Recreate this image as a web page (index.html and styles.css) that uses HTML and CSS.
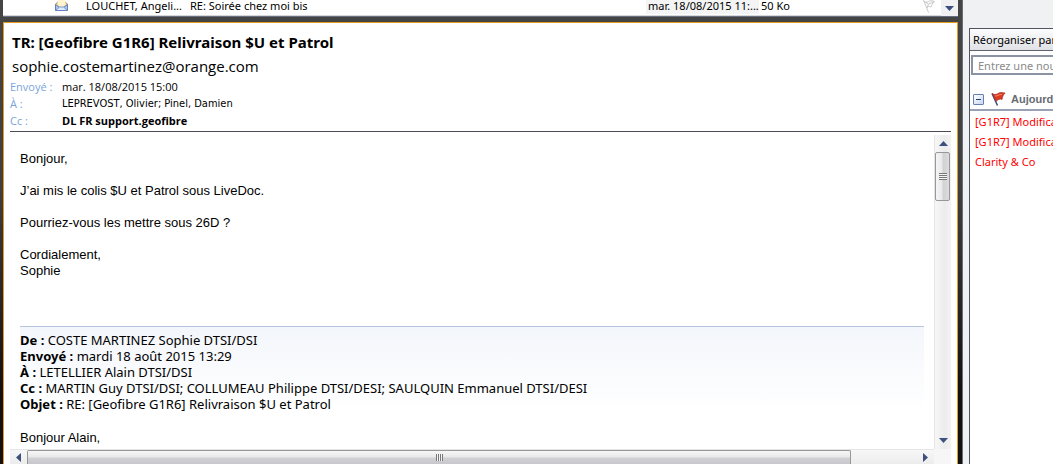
FILE: index.html
```html
<!DOCTYPE html>
<html lang="fr">
<head>
<meta charset="utf-8">
<title>TR: [Geofibre G1R6] Relivraison $U et Patrol</title>
<link rel="stylesheet" href="styles.css">
</head>
<body>
<div class="app">
  <main class="mail">
    <section class="list">
      <div class="list-row">
        <svg class="envelope" viewBox="0 0 13 11" aria-hidden="true">
          <path d="M.5 4 6.5 -1 12.5 4V10.500H.5Z" fill="#f3c95c" stroke="#8c8c9c"/>
          <path d="M2.500 0H10.500V5L6.500 8 2.500 5Z" fill="#fff4cf"/>
          <path d="M.5 4.500 4.500 7.500H8.500L12.500 4.500V10.500H.5Z" fill="#a9c8f2" stroke="#6582c0"/>
          <path d="M1 10 4.500 7H8.500L12 10" fill="#dceaff" stroke="#7795d0"/>
        </svg>
        <span class="list-from">LOUCHET, Angeli...</span>
        <span class="list-subject">RE: Soirée chez moi bis</span>
        <span class="list-date">mar. 18/08/2015 11:...</span>
        <span class="list-size">50 Ko</span>
        <svg class="flag-off" viewBox="0 0 14 13" aria-hidden="true">
          <path d="M1.500 0 6.500 12.500M2 1.500C5 4 7 -1 12.500 1.500C10 3 10 5 9 7C7 6 5.500 6.500 4.500 8M2 1.500 6.500 4 12 1.500M6.500 4 5 8" fill="none" stroke="#c9c9c9"/>
        </svg>
      </div>
      <button class="list-down" aria-label="Défiler vers le bas"><svg class="arrow-v" viewBox="0 0 9 5" aria-hidden="true"><path d="M0 0H9L4.500 5Z"/></svg></button>
    </section>

    <article class="reader">
      <header class="head">
        <h1 class="subject">TR: [Geofibre G1R6] Relivraison $U et Patrol</h1>
        <p class="sender">sophie.costemartinez@orange.com</p>
        <dl class="meta">
          <dt>Envoyé :</dt><dd>mar. 18/08/2015 15:00</dd>
          <dt>À :</dt><dd class="recipients">LEPREVOST, Olivier; Pinel, Damien</dd>
          <dt>Cc :</dt><dd class="strong">DL FR support.geofibre</dd>
        </dl>
      </header>
      <div class="view">
        <div class="message">
          <p>Bonjour,</p>
          <p>J’ai mis le colis $U et Patrol sous LiveDoc.</p>
          <p>Pourriez-vous les mettre sous 26D ?</p>
          <p>Cordialement,<br>Sophie</p>
          <div class="quoted">
            <b>De :</b> COSTE MARTINEZ Sophie DTSI/DSI<br>
            <b>Envoyé :</b> mardi 18 août 2015 13:29<br>
            <b>À :</b> LETELLIER Alain DTSI/DSI<br>
            <b>Cc :</b> MARTIN Guy DTSI/DSI; COLLUMEAU Philippe DTSI/DESI; SAULQUIN Emmanuel DTSI/DESI<br>
            <b>Objet :</b> RE: [Geofibre G1R6] Relivraison $U et Patrol
          </div>
          <p>Bonjour Alain,</p>
        </div>
        <div class="vbar">
          <button class="bar-btn" aria-label="Haut"><svg class="arrow-v" viewBox="0 0 9 5" aria-hidden="true"><path d="M0 5H9L4.500 0Z"/></svg></button>
          <div class="vthumb"><span class="vgrip"></span></div>
          <button class="bar-btn bar-end" aria-label="Bas"><svg class="arrow-v" viewBox="0 0 9 5" aria-hidden="true"><path d="M0 0H9L4.500 5Z"/></svg></button>
        </div>
        <div class="hbar">
          <button class="bar-btn" aria-label="Gauche"><svg class="arrow-h" viewBox="0 0 5 9" aria-hidden="true"><path d="M5 0V9L0 4.500Z"/></svg></button>
          <div class="htrack"><div class="hthumb"><span class="hgrip"></span></div></div>
          <button class="bar-btn" aria-label="Droite"><svg class="arrow-h" viewBox="0 0 5 9" aria-hidden="true"><path d="M0 0V9L5 4.500Z"/></svg></button>
        </div>
        <div class="corner"></div>
      </div>
    </article>
  </main>

  <aside class="side">
    <div class="tasks">
      <button class="sort">Réorganiser par</button>
      <input class="new-task" type="text" placeholder="Entrez une nouvelle tâche" aria-label="Nouvelle tâche">
      <h2 class="group">
        <button class="toggle" aria-label="Réduire"></button>
        <svg class="flag" viewBox="0 0 15 14" aria-hidden="true">
          <path d="M1 1.500 6.500 13.500" stroke="#34507e" stroke-width="1.500" fill="none"/>
          <path d="M1.500 1.500C4 3.500 6 2 8 1C10 0 12 1 14 1C12 3 11.500 5 11 7.500C9 6.500 6.500 7.500 5 9.500Z" fill="#dc3b22" stroke="#a32a1c" stroke-width=".7"/>
          <path d="M4 4C6.500 4.500 8 2 11 2.500" stroke="#ff8a6a" stroke-width="1" fill="none"/>
        </svg>
        <span>Aujourd'hui</span>
      </h2>
      <ul class="items">
        <li>[G1R7] Modification</li>
        <li>[G1R7] Modification</li>
        <li>Clarity &amp; Co</li>
      </ul>
    </div>
  </aside>
</div>
</body>
</html>
```
FILE: styles.css
```css
* { box-sizing: border-box; }
body { margin: 0; font: 11px/16px "Noto Sans", sans-serif; color: #000; background: #eff1f3; }
button { margin: 0; padding: 0; border: 0; background: none; font: inherit; color: inherit; }
h1, h2, p, dl, dd, ul { margin: 0; padding: 0; }

.app { display: grid; grid-template-columns: minmax(0, 1fr) 90px; grid-template-rows: minmax(0, 1fr); height: 100vh; overflow: hidden; }
.mail { display: flex; flex-direction: column; gap: 5px; padding: 0 4px 0 3px; border-right: 1px solid #686d7a; background: linear-gradient(#454545, #404040 40%, #111 85%); }

.list { display: flex; flex: none; height: 17px; background: #fff; border-bottom: 1px solid #687080; }
.list-row { flex: 1; min-width: 0; display: flex; align-items: flex-start; line-height: 12px; white-space: nowrap; border-bottom: 1px solid #d5d7da; padding-left: 52px; }
.envelope { width: 13px; height: 11px; margin-right: 18px; flex: none; }
.list-from { width: 104px; flex: none; }
.list-subject { flex: 1; }
.list-date { width: 113px; height: 14px; padding-left: 2px; background: #f4f4f5; }
.list-size { width: 163px; padding-left: 2px; }
.flag-off { width: 14px; height: 13px; flex: none; margin-right: 5px; }
.list-down { width: 17px; background: #f1f1f3; display: flex; align-items: center; justify-content: center; }
.arrow-v { width: 9px; height: 5px; display: block; fill: #3c4f7d; }
.arrow-h { width: 5px; height: 9px; display: block; fill: #3c4f7d; }

.reader { flex: 1; min-height: 0; display: flex; flex-direction: column; border: 1px solid #e59a20; border-bottom: 0; background: #fff; padding: 0 6px; }
.head { flex: none; padding-top: 8px; border-bottom: 1px solid #4c4a55; }
.subject { padding-left: 2px; font: bold 15px/22px "Noto Sans", sans-serif; }
.sender { padding-left: 2px; font: 15px/26px "Open Sans", sans-serif; }
.meta { display: grid; grid-template-columns: 52px 1fr; grid-auto-rows: 17px; font-family: "Open Sans", sans-serif; line-height: 16px; padding-bottom: 1px; }
.meta dt { color: #7ba4d9; }
.recipients { font-family: "DejaVu Sans Condensed", sans-serif; }
.strong { font-weight: bold; }

.view { flex: 1; min-height: 0; padding-top: 3px; display: grid; grid-template-columns: minmax(0, 1fr) 17px; grid-template-rows: minmax(0, 1fr) 15px; }
.message { overflow: hidden; padding: 16px 10px 0; font: 13px/16px "Liberation Sans", Arial, sans-serif; }
.message p { margin-bottom: 16px; }
.quoted { margin: 47px 0 18px; padding: 5px 0 0; border-top: 1px solid #b5c4df; background: linear-gradient(#f3f6fb, #fff); font-family: "Noto Sans", sans-serif; }

.bar-btn { display: flex; align-items: center; justify-content: center; width: 17px; height: 17px; flex: none; }
.vbar { display: flex; flex-direction: column; border-left: 1px solid #e5e5e5; background: linear-gradient(90deg, #f7f7f7, #ececec 60%, #f3f3f3); }
.vthumb { width: 15px; height: 49px; border: 1px solid #979797; border-radius: 2px; background: linear-gradient(90deg, #f5f5f5, #e9e9eb 45%, #d0d1d4 55%, #dcdcde); display: grid; place-items: center; }
.vgrip { width: 8px; height: 7px; background: repeating-linear-gradient(#777 0 1px, #f4f4f4 1px 2px); }
.bar-end { margin-top: auto; }
.hbar { display: flex; border-top: 1px solid #e5e5e5; background: linear-gradient(#f7f7f7, #ececec); }
.hbar .bar-btn { height: 15px; }
.htrack { flex: 1; display: grid; grid-template-columns: 25fr 2fr; }
.hthumb { height: 14px; border: 1px solid #979797; border-bottom: 0; border-radius: 2px 2px 0 0; background: linear-gradient(#f7f7f7, #e9e9eb 45%, #d0d1d4 55%, #c8c8cc); display: grid; place-items: center; }
.hgrip { width: 7px; height: 7px; background: repeating-linear-gradient(90deg, #777 0 1px, #f4f4f4 1px 2px); }
.corner { background: #f6f6f6; }

.side { padding: 28px 0 0 6px; display: flex; flex-direction: column; overflow: hidden; }
.tasks { flex: 1; border: solid #50525f; border-width: 1px 0 0 1px; background: #fff; overflow: hidden; white-space: nowrap; }
.sort { display: block; width: 100%; height: 22px; padding-left: 3px; text-align: left; white-space: nowrap; overflow: hidden; background: linear-gradient(#fdfdfe, #dfe1e5); border-bottom: 1px solid #60626e; }
.new-task { display: block; width: 180px; height: 20px; margin: 4px 0 0 1px; padding: 0 5px; border: 2px solid #8b93a3; font: 11px/16px "Noto Sans", sans-serif; }
.new-task::placeholder { color: #8a8a8a; opacity: 1; }
.group { display: flex; align-items: center; height: 36px; padding: 14px 0 0 3px; border-bottom: 2px solid #99a2b4; font: bold 11px/16px "Liberation Sans", Arial, sans-serif; color: #666b73; }
.toggle { flex: none; width: 11px; height: 11px; border: 1px solid #6680ae; border-radius: 1px; background: linear-gradient(#24406e, #24406e) center / 5px 1px no-repeat, linear-gradient(135deg, #fff, #c9d7ef); }
.flag { width: 15px; height: 14px; margin: 0 5px 0 7px; flex: none; }
.items { list-style: none; padding: 1px 0 0 5px; line-height: 20px; color: #f00; }
```
